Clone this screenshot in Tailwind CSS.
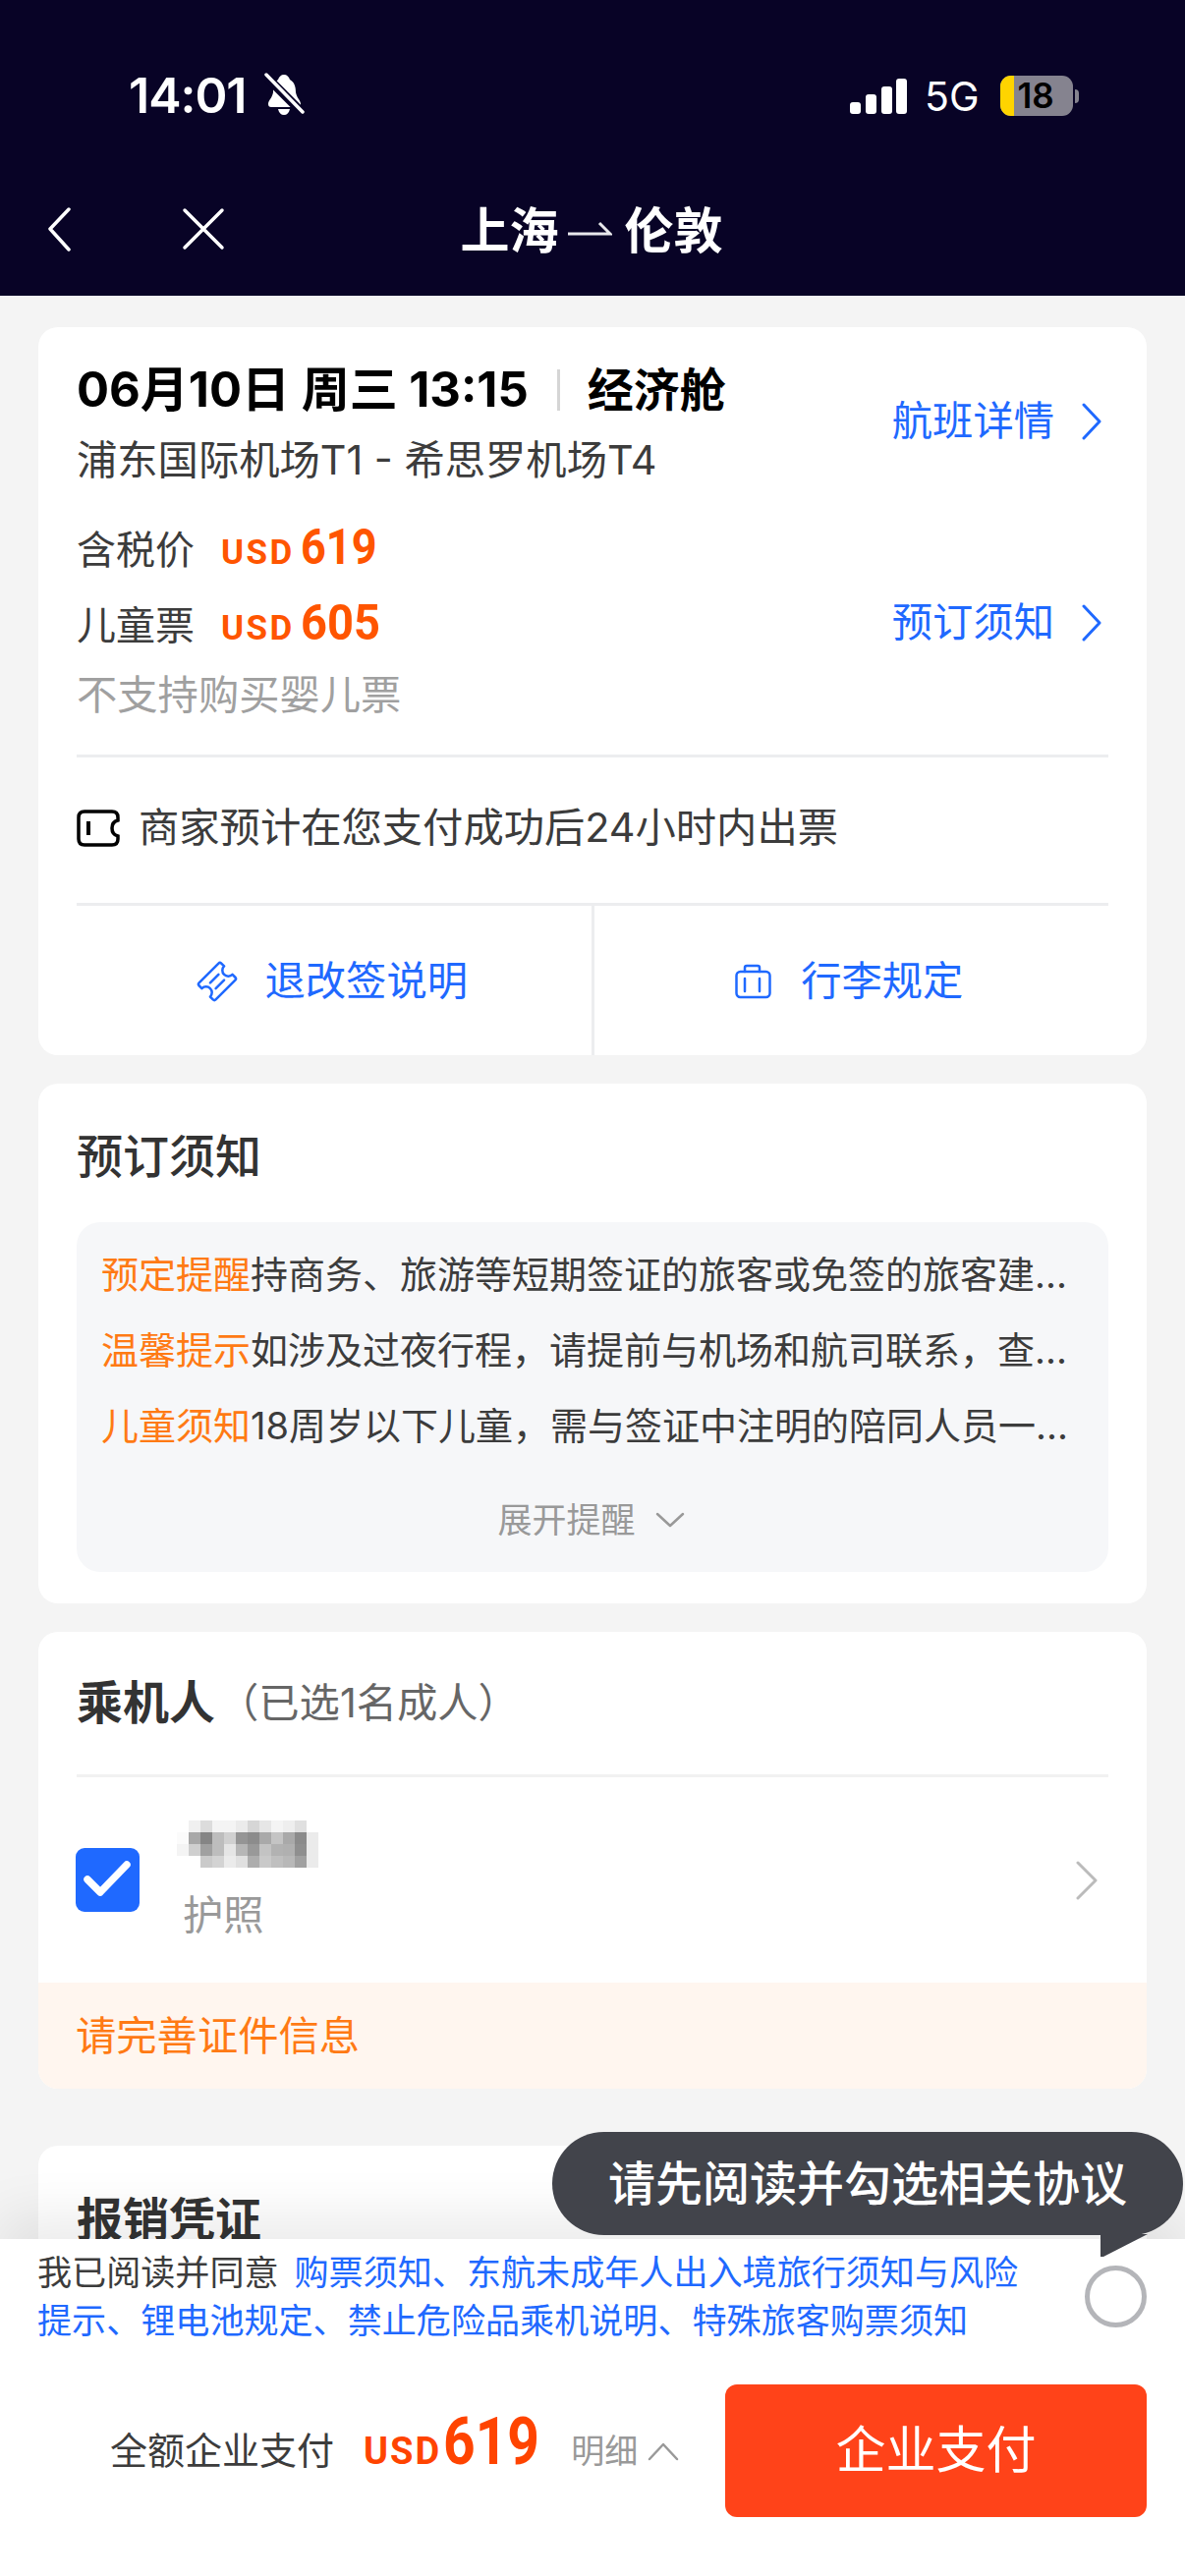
<!DOCTYPE html>
<html lang="zh-CN">
<head>
  <meta charset="UTF-8" />
  <meta name="viewport" content="width=device-width, initial-scale=1" />
  <title>企业支付</title>
  <script src="https://cdn.jsdelivr.net/npm/@tailwindcss/browser@4"></script>
</head>
<body class="bg-[#f4f4f4]">
  <div class="relative w-[1206px] h-[2622px] overflow-hidden flex flex-col font-[Inter,'Noto_Sans_CJK_SC',sans-serif] text-[41.3px] text-[#3c3c3c]">

    <!-- header -->
    <header class="h-[301px] shrink-0 bg-[#080326] text-white">
      <div class="h-[190px] relative">
        <div class="absolute left-[131px] top-[66px] flex items-center gap-[18px]">
          <span class="text-[50px] leading-[62px] font-semibold tracking-[-1px]">14:01</span>
          <svg width="42" height="46" viewBox="0 0 42 46">
            <path fill="#fff" d="M20 2c3 0 5 2 6 5 5 3 6 8 6 13 1 6 5 8 5 12 0 2-1 3-3 3H7c-2 0-3-1-3-3 0-4 4-6 5-12 0-5 1-10 5-13 1-3 3-5 6-5z" />
            <path fill="#fff" d="M14 37h12c-1 4-3 6-6 6s-5-2-6-6z" />
            <path stroke="#080326" stroke-width="9" d="M4 6l36 36" />
            <path stroke="#fff" stroke-width="3.5" stroke-linecap="round" d="M2 2l37 38" />
          </svg>
        </div>
        <div class="absolute left-[865px] top-[77px] flex items-center">
          <svg width="58" height="38" viewBox="0 0 58 38" fill="#fff">
            <rect x="0" y="25" width="11" height="12" rx="3" />
            <rect x="16" y="17" width="11" height="20" rx="3" />
            <rect x="32" y="9" width="11" height="28" rx="3" />
            <rect x="47" y="1" width="11" height="36" rx="3" />
          </svg>
          <span class="ml-[18px] text-[41px] leading-[40px] font-normal">5G</span>
          <div class="ml-[21px] relative w-[74px] h-[41px] rounded-[11px] bg-[#85838f] overflow-hidden flex items-center">
            <div class="w-[14px] h-full bg-[#ffd400]"></div>
            <span class="ml-[4px] text-[35px] leading-[41px] font-semibold text-black">18</span>
          </div>
          <div class="ml-[2px] w-[4px] h-[14px] rounded-r-full bg-[#85838f]"></div>
        </div>
      </div>
      <nav class="relative h-[90px] flex items-center justify-center">
        <svg class="absolute left-[46px] top-[20px]" width="28" height="46" viewBox="0 0 28 46" fill="none" stroke="#fff" stroke-width="3.5" stroke-linecap="round" stroke-linejoin="round"><path d="M24 3L5 23l19 21" /></svg>
        <svg class="absolute left-[185px] top-[21px]" width="44" height="44" viewBox="0 0 44 44" fill="none" stroke="#fff" stroke-width="3.5" stroke-linecap="round"><path d="M3 3l38 38M41 3L3 41" /></svg>
        <div class="flex items-center text-[50px] leading-[60px] font-bold pr-[2px]">
          <span>上海</span>
          <svg class="ml-[9px] mr-[13px]" width="45" height="20" viewBox="0 0 45 20" fill="none" stroke="#e8e8ec" stroke-width="3"><path d="M0 13h43L32 2" /></svg>
          <span>伦敦</span>
        </div>
      </nav>
    </header>

    <!-- scrolling content -->
    <main class="h-[1978px] shrink-0 overflow-hidden px-[39px] pt-[32px]">

      <section class="bg-white rounded-[20px] h-[741px]">
        <div class="px-[39px]">
          <div class="flex justify-between h-[435px]">
            <div class="pt-[34px]">
              <div class="flex items-center h-[60px] text-[49px] font-bold text-black">
                <span>06月10日 周三 13:15</span>
                <span class="ml-[29px] w-[3px] h-[42px] bg-[#d5d5d5]"></span>
                <span class="ml-[28px] text-[47px]">经济舱</span>
              </div>
              <div class="mt-[16px] leading-[50px]">浦东国际机场T1 - 希思罗机场T4</div>
              <div class="mt-[37px] flex items-center h-[60px] text-[40px]">
                <span>含税价</span>
                <div class="ml-[27px] flex items-baseline font-['Roboto',sans-serif] font-bold text-[#ff5500] leading-[60px]">
                  <span class="text-[35px] tracking-[2.5px]">USD</span>
                  <span class="ml-[6px] inline-block w-[78px] origin-left scale-x-[0.9] text-[50px]">619</span>
                </div>
              </div>
              <div class="mt-[17px] flex items-center h-[60px] text-[40px]">
                <span>儿童票</span>
                <div class="ml-[27px] flex items-baseline font-['Roboto',sans-serif] font-bold text-[#ff5500] leading-[60px]">
                  <span class="text-[35px] tracking-[2.5px]">USD</span>
                  <span class="ml-[6px] inline-block w-[81px] origin-left scale-x-[0.94] text-[50px]">605</span>
                </div>
              </div>
              <div class="mt-[15px] leading-[50px] text-[#a0a0a0]">不支持购买婴儿票</div>
            </div>
            <div class="flex flex-col text-[#1f69ff]">
              <div class="mt-[71px] flex items-center h-[50px]">
                <span>航班详情</span>
                <svg class="ml-[27px] mr-[6px]" width="22" height="38" viewBox="0 0 22 38" fill="none" stroke="#1f69ff" stroke-width="3" stroke-linecap="round" stroke-linejoin="round"><path d="M3 2l16 17L3 36" /></svg>
              </div>
              <div class="mt-[155px] flex items-center h-[50px]">
                <span>预订须知</span>
                <svg class="ml-[27px] mr-[6px]" width="22" height="38" viewBox="0 0 22 38" fill="none" stroke="#1f69ff" stroke-width="3" stroke-linecap="round" stroke-linejoin="round"><path d="M3 2l16 17L3 36" /></svg>
              </div>
            </div>
          </div>
          <div class="h-[154px] pb-[4px] border-y-[3px] border-[#ecedef] flex items-center">
            <svg width="44" height="38" viewBox="0 0 44 38" fill="none" stroke="#000" stroke-width="3.5"><path d="M8 2h28q6 0 6 6v3c-8 2-8 14 0 16v3q0 6-6 6H8q-6 0-6-6V8q0-6 6-6z" /><path stroke-width="4" d="M12 12v14" /></svg>
            <span class="ml-[19px]">商家预计在您支付成功后24小时内出票</span>
          </div>
          <div class="h-[152px] pt-[2px] flex text-[#1f69ff]">
            <div class="flex-1 flex items-center justify-center gap-[28px] pr-[4px]">
              <svg width="42" height="42" viewBox="0 0 42 42" fill="none" stroke="#1f69ff" stroke-width="2.5" stroke-linecap="round" stroke-linejoin="round"><g transform="rotate(-45 21 21)"><path d="M7 9h28q2 0 2 2v4a6 6 0 000 12v4q0 2-2 2H7q-2 0-2-2v-4a6 6 0 000-12v-4q0-2 2-2z" /><path d="M15 17h12M15 25h12" /></g></svg>
              <span>退改签说明</span>
            </div>
            <div class="-mt-[2px] w-[3px] bg-[#ecedef]"></div>
            <div class="flex-1 flex items-center justify-center gap-[30px] pr-[4px]">
              <svg width="37" height="36" viewBox="0 0 37 36" fill="none" stroke="#1f69ff" stroke-width="2.5" stroke-linecap="round" stroke-linejoin="round"><path d="M10 8V4q0-2 2-2h11q2 0 2 2v4" /><rect x="1.5" y="8" width="34" height="26" rx="4" /><path d="M10 15v13M25 15v13" /></svg>
              <span>行李规定</span>
            </div>
          </div>
        </div>
      </section>

      <section class="mt-[29px] bg-white rounded-[20px] h-[529px] px-[39px]">
        <h2 class="h-[141px] pt-[8px] flex items-center text-[47px] font-medium text-[#333]">预订须知</h2>
        <div class="h-[356px] rounded-[24px] bg-[#f6f7f9] pt-[15px] text-[38px] leading-[77px]">
          <p class="pl-[25px] whitespace-nowrap"><span class="text-[#ff7a14]">预定提醒</span>持商务、旅游等短期签证的旅客或免签的旅客建...</p>
          <p class="pl-[25px] whitespace-nowrap"><span class="text-[#ff7a14]">温馨提示</span>如涉及过夜行程，请提前与机场和航司联系，查...</p>
          <p class="pl-[25px] whitespace-nowrap"><span class="text-[#ff7a14]">儿童须知</span>18周岁以下儿童，需与签证中注明的陪同人员一...</p>
          <div class="mt-[32px] h-[50px] flex items-center justify-center gap-[20px] text-[35px] text-[#999] pr-[3px]">
            <span>展开提醒</span>
            <svg width="30" height="16" viewBox="0 0 30 16" fill="none" stroke="#999" stroke-width="2.5" stroke-linecap="round" stroke-linejoin="round"><path d="M2 2l13 12L28 2" /></svg>
          </div>
        </div>
      </section>

      <section class="mt-[29px] bg-white rounded-[20px] h-[465px] overflow-hidden">
        <div class="mx-[39px] h-[148px] border-b-[3px] border-[#f1f1f1] flex items-center">
          <span class="text-[47px] font-bold text-[#333]">乘机人</span>
          <span class="ml-[3px] text-[#666]">（已选1名成人）</span>
        </div>
        <div class="relative mx-[38px] h-[209px] flex items-center">
          <div class="w-[65px] h-[65px] rounded-[9px] bg-[#1f69ff] flex items-center justify-center">
            <svg width="65" height="65" viewBox="0 0 65 65" fill="none" stroke="#fff" stroke-width="7.5" stroke-linecap="round" stroke-linejoin="round"><path d="M12 32l13 13 27-28" /></svg>
          </div>
          <div class="ml-[38px] flex flex-col">
            <div class="grid grid-cols-[repeat(12,12px)] auto-rows-[12px]">
              <i class="bg-white"></i><i class="bg-[#f0f0f0]"></i><i class="bg-[#dcdcdc]"></i><i class="bg-[#f4f4f4]"></i><i class="bg-[#f4f4f4]"></i><i class="bg-[#ebebeb]"></i><i class="bg-[#d6d6d6]"></i><i class="bg-[#e6e6e6]"></i><i class="bg-[#f4f4f4]"></i><i class="bg-[#eeeeee]"></i><i class="bg-[#e0e0e0]"></i><i class="bg-white"></i>
              <i class="bg-[#fbfbfb]"></i><i class="bg-[#a8a8a8]"></i><i class="bg-[#858585]"></i><i class="bg-[#bdbdbd]"></i><i class="bg-[#d0d0d0]"></i><i class="bg-[#959595]"></i><i class="bg-[#8c8c8c]"></i><i class="bg-[#a9a9a9]"></i><i class="bg-[#c4c4c4]"></i><i class="bg-[#a9a9a9]"></i><i class="bg-[#8b8b8b]"></i><i class="bg-[#ebebeb]"></i>
              <i class="bg-[#f4f4f4]"></i><i class="bg-[#cfcfcf]"></i><i class="bg-[#a0a0a0]"></i><i class="bg-[#bdbdbd]"></i><i class="bg-[#e5e5e5]"></i><i class="bg-[#b6b6b6]"></i><i class="bg-[#999999]"></i><i class="bg-[#c3c3c3]"></i><i class="bg-[#b2b2b2]"></i><i class="bg-[#b0b0b0]"></i><i class="bg-[#8f8f8f]"></i><i class="bg-[#ebebeb]"></i>
              <i class="bg-white"></i><i class="bg-white"></i><i class="bg-[#cacaca]"></i><i class="bg-[#d3d3d3]"></i><i class="bg-[#ebebeb]"></i><i class="bg-[#e0e0e0]"></i><i class="bg-[#adadad]"></i><i class="bg-[#c9c9c9]"></i><i class="bg-[#bfbfbf]"></i><i class="bg-[#b8b8b8]"></i><i class="bg-[#a0a0a0]"></i><i class="bg-[#ebebeb]"></i>
            </div>
            <span class="mt-[23px] pl-[6px] leading-[50px] text-[#999]">护照</span>
          </div>
          <svg class="ml-auto mr-[11px]" width="24" height="40" viewBox="0 0 24 40" fill="none" stroke="#bbb" stroke-width="3" stroke-linecap="round" stroke-linejoin="round"><path d="M3 2l18 18L3 38" /></svg>
        </div>
        <div class="h-[108px] pt-[2px] bg-[#fff6ef] px-[38px] flex items-center text-[#ff7a14]">请完善证件信息</div>
      </section>

      <section class="mt-[58px] bg-white rounded-t-[20px] h-[200px] px-[39px] pt-[45px]">
        <h2 class="h-[60px] flex items-center text-[47px] font-bold text-[#333]">报销凭证</h2>
      </section>
    </main>

    <!-- bottom bar -->
    <footer class="relative flex-1 bg-white shadow-[0_-24px_50px_rgba(0,0,0,0.08)]">
      <div class="flex justify-between pl-[38px] pr-[39px] pt-[10px]">
        <p class="w-[1021px] text-[35.1px] leading-[49px]">我已阅读并同意<span class="ml-[16px] text-[#1f69ff]">购票须知、东航未成年人出入境旅行须知与风险提示、锂电池规定、禁止危险品乘机说明、特殊旅客购票须知</span></p>
        <div class="mt-[17px] w-[63px] h-[63px] rounded-full border-[5px] border-[#b4b5b9]"></div>
      </div>
      <div class="mt-[40px] flex items-center pr-[39px]">
        <span class="ml-[112px] text-[38px]">全额企业支付</span>
        <div class="ml-[30px] mb-[10px] flex items-baseline font-['Roboto',sans-serif] font-bold text-[#ff4400] leading-[70px]">
          <span class="text-[38px] tracking-[2px]">USD</span>
          <span class="ml-[2px] inline-block w-[98px] origin-left scale-x-[0.85] text-[67px]">619</span>
        </div>
        <span class="ml-[32px] text-[34px] text-[#999]">明细</span>
        <svg class="ml-[10px]" width="32" height="20" viewBox="0 0 32 20" fill="none" stroke="#999" stroke-width="2.5" stroke-linecap="round" stroke-linejoin="round"><path d="M2 18L16 3l14 15" /></svg>
        <button class="ml-auto w-[429px] h-[135px] rounded-[12px] bg-[#ff4319] text-white text-[51px]">企业支付</button>
      </div>
    </footer>

    <!-- tooltip -->
    <div class="absolute left-[562px] top-[2170px] w-[642px] h-[105px] rounded-full bg-[#42444b] flex items-center justify-center text-white text-[48px] font-medium">
      请先阅读并勾选相关协议
      <svg class="absolute left-[558px] top-[104px]" width="50" height="24" viewBox="0 0 50 24" fill="#42444b"><path d="M0 0h48L3 23H0z" /></svg>
    </div>
  </div>
</body>
</html>
